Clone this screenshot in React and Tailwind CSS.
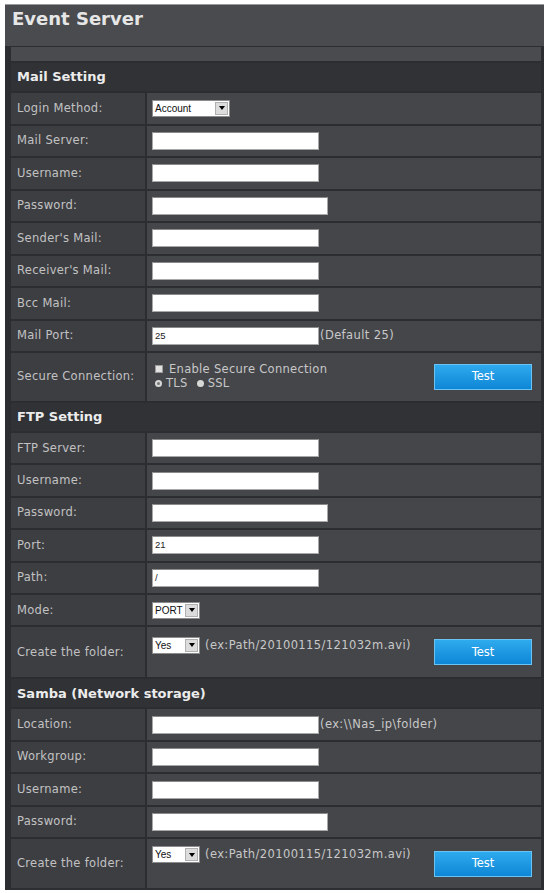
import React from 'react'

const font = "font-['DejaVu_Sans',Verdana,sans-serif]"

function Input({ w = 'w-[167px]', value = '' }) {
  return (
    <div className={`h-[18px] ${w} bg-white border border-[#a8a8a8] border-t-[#8a8a8a] flex items-center pl-[2px] text-[9.5px] text-[#222] font-['Liberation_Sans',Arial,sans-serif]`}>
      {value}
    </div>
  )
}

function Select({ w, value }) {
  return (
    <div className={`h-[17px] ${w} bg-white border border-[#8c8c8c] flex items-center`}>
      <span className="flex-1 pl-[2px] text-[10px] text-[#111] font-['Liberation_Sans',Arial,sans-serif]">{value}</span>
      <span className="w-[13px] h-[13px] mr-[1px] bg-[#dcdcdc] border border-[#b0b0b0] flex items-center justify-center">
        <span className="w-0 h-0 border-l-[3px] border-r-[3px] border-t-[4px] border-l-transparent border-r-transparent border-t-black" />
      </span>
    </div>
  )
}

function Hint({ children }) {
  return <span className="ml-[1px] text-[11.5px] tracking-[0.4px] text-[#c8c8c8] whitespace-nowrap">{children}</span>
}

function TestButton() {
  return (
    <button className="w-[98px] h-[26px] mr-[9px] bg-linear-to-b from-[#2eaaee] to-[#0c86d6] border border-[#6cc2f0] text-white text-[11.5px]">
      Test
    </button>
  )
}

function Row({ label, h = 'h-[30.5px]', children }) {
  return (
    <div className={`flex gap-[2px] ${h}`}>
      <div className="w-[134px] shrink-0 bg-[#3d3e42] flex items-center pl-[6px] text-[11.5px] tracking-[0.3px] text-[#c2c2c2] whitespace-nowrap">
        {label}
      </div>
      <div className="flex-1 bg-[#45464a] flex items-center pl-[5px]">{children}</div>
    </div>
  )
}

function Header({ children }) {
  return (
    <div className="h-[28px] bg-[#303235] flex items-center pl-[6px] text-[13px] font-bold text-[#ececec]">
      {children}
    </div>
  )
}

function FolderRow({ h, lift }) {
  return (
    <Row label="Create the folder:" h={h}>
      <div className="flex-1 flex items-center justify-between">
        <div className={`flex items-center gap-[4px] ${lift}`}>
          <Select w="w-[48px]" value="Yes" />
          <Hint>(ex:Path/20100115/121032m.avi)</Hint>
        </div>
        <TestButton />
      </div>
    </Row>
  )
}

export default function App() {
  return (
    <div className={`min-h-screen bg-white pt-[4px] ${font}`}>
      <div className="ml-[5px] w-[539px] bg-[#303134] border-t border-[#9a9a9a]">
        <div className="h-[41px] bg-[#4a4b4f] pl-[7px] pt-[3px] text-[18px] font-bold text-[#e6e6e6] leading-[22px]">
          Event Server
        </div>

        <div className="pl-[6px] pr-[3px] pt-[1px] pb-[2px] flex flex-col gap-[2px] bg-[#2c2d30]">
          <div className="h-[14px] bg-[#4a4b4f]" />

          <Header>Mail Setting</Header>
          <Row label="Login Method:">
            <Select w="w-[78px]" value="Account" />
          </Row>
          <Row label="Mail Server:"><Input /></Row>
          <Row label="Username:"><Input /></Row>
          <Row label="Password:"><Input w="w-[176px]" /></Row>
          <Row label="Sender's Mail:"><Input /></Row>
          <Row label="Receiver's Mail:"><Input /></Row>
          <Row label="Bcc Mail:"><Input /></Row>
          <Row label="Mail Port:">
            <Input value="25" />
            <Hint>(Default 25)</Hint>
          </Row>
          <Row label="Secure Connection:" h="h-[48px]">
            <div className="flex-1 flex items-center justify-between">
              <div className="flex flex-col pl-[3px] text-[11.5px] tracking-[0.3px] text-[#c8c8c8] leading-[14px] mb-[2px]">
                <div className="flex items-center gap-[6px]">
                  <span className="w-[8px] h-[8px] bg-[#e2e2e2] border border-[#9c9c9c]" />
                  <span>Enable Secure Connection</span>
                </div>
                <div className="flex items-center gap-[4px]">
                  <span className="w-[7px] h-[7px] rounded-full bg-[#d8d8d8] flex items-center justify-center">
                    <span className="w-[3px] h-[3px] rounded-full bg-[#777]" />
                  </span>
                  <span>TLS</span>
                  <span className="ml-[5px] w-[7px] h-[7px] rounded-full bg-[#d8d8d8]" />
                  <span>SSL</span>
                </div>
              </div>
              <TestButton />
            </div>
          </Row>

          <Header>FTP Setting</Header>
          <Row label="FTP Server:" h="h-[30.4px]"><Input /></Row>
          <Row label="Username:" h="h-[30.4px]"><Input /></Row>
          <Row label="Password:" h="h-[30.4px]"><Input w="w-[176px]" /></Row>
          <Row label="Port:" h="h-[30.4px]"><Input value="21" /></Row>
          <Row label="Path:" h="h-[30.4px]"><Input value="/" /></Row>
          <Row label="Mode:" h="h-[30.4px]">
            <Select w="w-[48px]" value="PORT" />
          </Row>
          <FolderRow h="h-[50px]" lift="mb-[14px]" />

          <Header>Samba (Network storage)</Header>
          <Row label="Location:">
            <Input />
            <Hint>(ex:\\Nas_ip\folder)</Hint>
          </Row>
          <Row label="Workgroup:"><Input /></Row>
          <Row label="Username:"><Input /></Row>
          <Row label="Password:"><Input w="w-[176px]" /></Row>
          <FolderRow h="h-[49px]" lift="mb-[18px]" />
        </div>
      </div>
    </div>
  )
}
